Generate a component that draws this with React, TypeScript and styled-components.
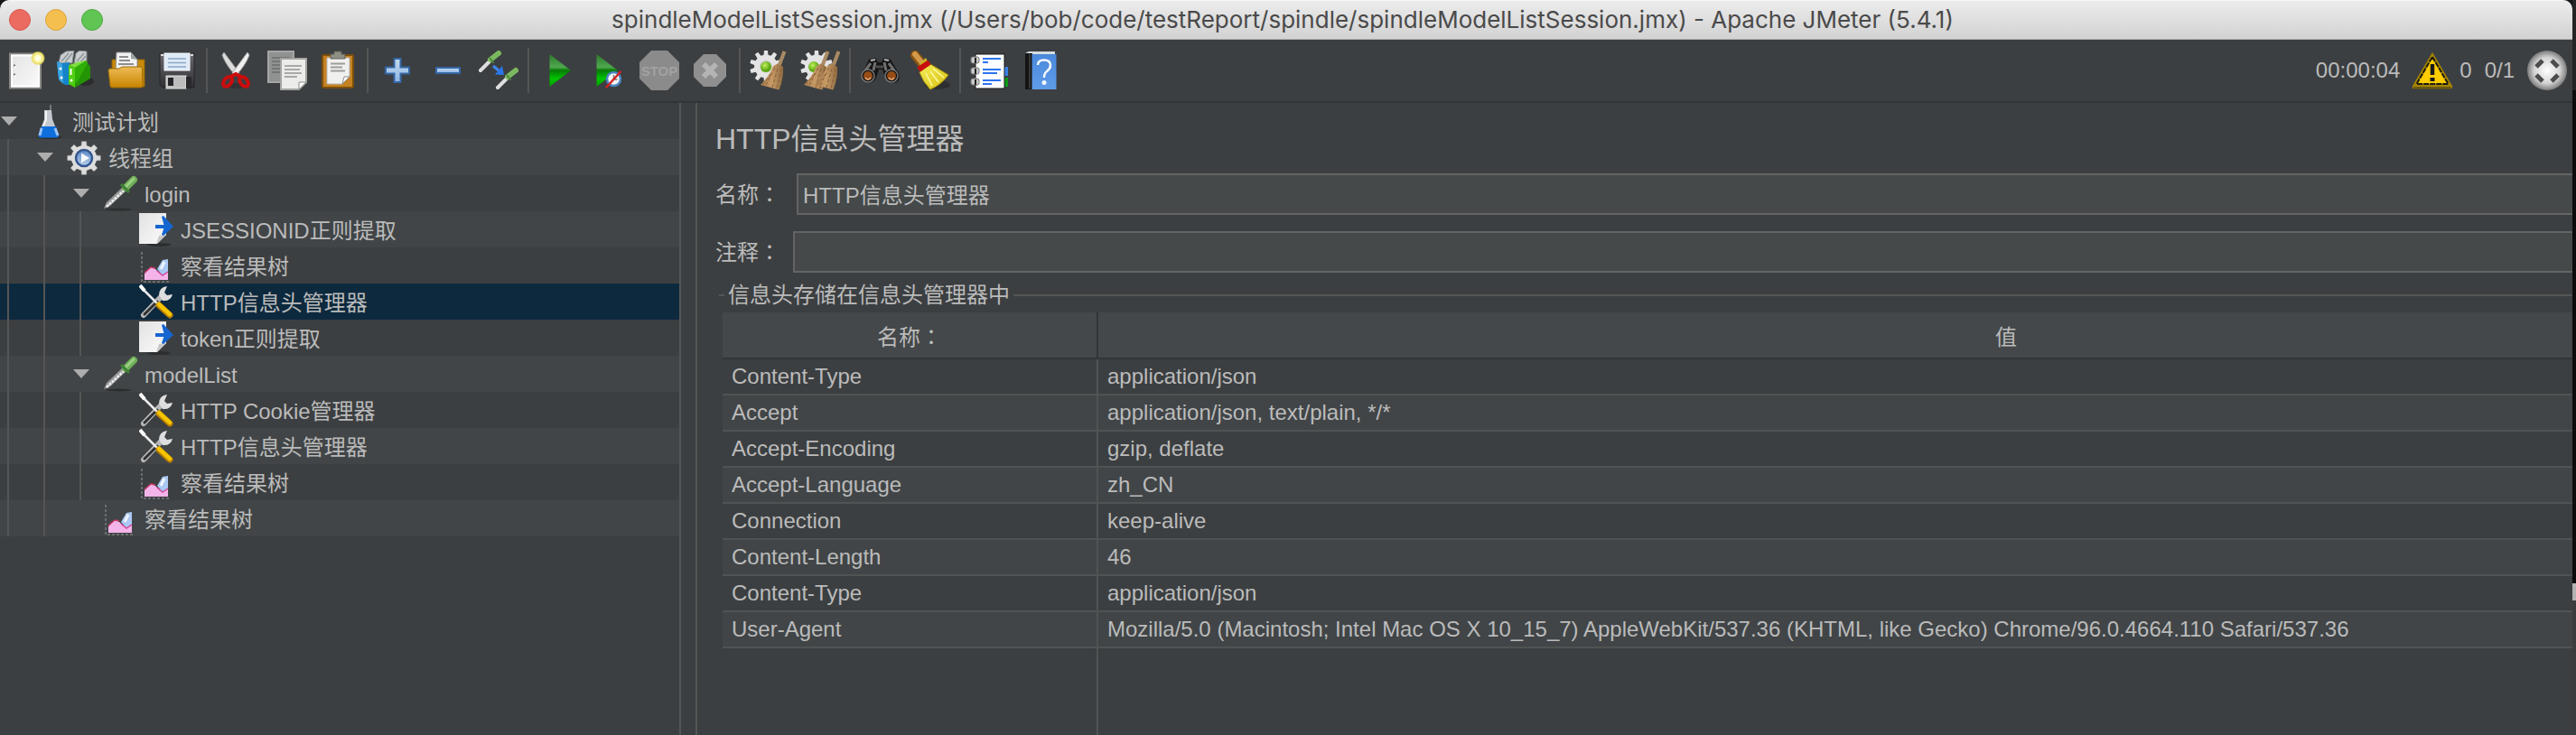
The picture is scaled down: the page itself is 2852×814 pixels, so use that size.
import React from "react";
import styled, { createGlobalStyle } from "styled-components";

const color = {
  panel: "#3c3f41",
  stripe: "#414547",
  header: "#44484a",
  line: "#555555",
  grid: "#505354",
  dark: "#323537",
  field: "#45494a",
  fieldBorder: "#646464",
  text: "#bbbbbb",
  selected: "#0d293e",
};

const GlobalStyle = createGlobalStyle`
  *, *::before, *::after { box-sizing: border-box; }
  body {
    margin: 0;
    background: #161718;
    color: ${color.text};
    font-family: "Liberation Sans", "Noto Sans CJK SC", sans-serif;
    font-size: 24px;
  }
  button, input { font: inherit; color: inherit; }
`;

const Desktop = styled.div`
  display: flex;
  min-height: 100vh;
`;

const Backdrop = styled.div`
  flex: none;
  width: 4px;
  background: linear-gradient(#232425 0 100px, #0c0c0d 100px 646px, #b4b2b2 646px 665px, #3a3c3e 665px);
`;

const Window = styled.div`
  flex: 1;
  min-width: 0;
  display: flex;
  flex-direction: column;
  overflow: hidden;
  border-radius: 10px 10px 0 0;
  background: ${color.panel};
`;

const TitleBar = styled.header`
  display: flex;
  align-items: center;
  height: 44px;
  padding: 0 18px 0 10px;
  background: linear-gradient(#ececec, #d2d2d2);
  border-top: 1px solid #f6f6f6;
  border-bottom: 1px solid #b1b1b1;
`;

const Lights = styled.div`
  flex: 1;
  display: flex;
  gap: 16px;
`;

const Light = styled.button<{ $fill: string; $edge: string }>`
  width: 24px;
  height: 24px;
  padding: 0;
  border: 1px solid ${(p) => p.$edge};
  border-radius: 50%;
  background: ${(p) => p.$fill};
`;

const WindowTitle = styled.h1`
  margin: 0;
  color: #4a4a4a;
  font-family: Inter, "Liberation Sans", sans-serif;
  font-size: 26px;
  font-weight: 400;
  line-height: 32px;
  white-space: nowrap;
`;

const TitleSpacer = styled.div`
  flex: 1;
`;

const ToolBar = styled.div`
  display: flex;
  align-items: center;
  height: 70px;
  padding-right: 6px;
  border-bottom: 2px solid ${color.dark};
`;

const ToolButton = styled.button`
  display: grid;
  place-items: center;
  width: 56px;
  height: 56px;
  padding: 0;
  border: 0;
  background: none;
`;

const Separator = styled.div`
  width: 2px;
  height: 50px;
  margin: 0 4px;
  background: ${color.line};
`;

const Status = styled.div`
  display: flex;
  align-items: center;
  gap: 14px;
  margin-left: auto;
`;

const Errors = styled.span`
  display: flex;
  align-items: center;
  gap: 8px;
`;

const Body = styled.div`
  flex: 1;
  display: flex;
`;

const TreePane = styled.nav`
  flex: none;
  width: 754px;
  border-right: 2px solid ${color.line};
`;

const Splitter = styled.div`
  flex: none;
  width: 18px;
  border-right: 2px solid ${color.line};
`;

const TreeList = styled.ul`
  margin: 0;
  padding: 0;
  list-style: none;
`;

const TreeRow = styled.li<{ $odd: boolean; $selected: boolean }>`
  display: flex;
  height: 40px;
  background: ${(p) => (p.$selected ? color.selected : p.$odd ? color.stripe : color.panel)};
`;

const Guide = styled.span`
  width: 32px;
  margin-left: 8px;
  border-left: 2px solid ${color.line};
`;

const Toggle = styled.button`
  display: grid;
  place-items: center;
  width: 34px;
  padding: 0 14px 0 0;
  border: 0;
  background: none;
`;

const Leaf = styled.span`
  width: 34px;
`;

const NodeName = styled.span`
  margin-left: 6px;
  padding-top: 4px;
  line-height: 36px;
  white-space: nowrap;
`;

const Main = styled.main`
  flex: 1;
  min-width: 0;
  display: flex;
  overflow: hidden;
`;

/* The editor form is wider than its pane and runs on past the right edge. */
const Form = styled.form`
  flex: none;
  display: flex;
  flex-direction: column;
  width: calc(100% + 378px);
  padding: 20px 0 0 20px;
`;

const Heading = styled.h2`
  margin: 0 0 18px;
  font-size: 32px;
  font-weight: 400;
  line-height: 40px;
`;

const Field = styled.div<{ $gap: number }>`
  display: flex;
  align-items: center;
  gap: ${(p) => p.$gap}px;
  margin-bottom: 18px;
`;

const Label = styled.label`
  flex: none;
  line-height: 32px;
`;

const Colon = styled.span`
  font-family: "Noto Sans CJK TC", sans-serif;
`;

const TextInput = styled.input`
  flex: 1;
  min-width: 0;
  height: 46px;
  padding: 0 5px 2px;
  border: 2px solid ${color.fieldBorder};
  border-radius: 0;
  background: ${color.field};
  line-height: 32px;
  outline: none;
`;

const Group = styled.fieldset`
  flex: 1;
  display: flex;
  flex-direction: column;
  min-width: 0;
  margin: -5px 0 0 4px;
  padding: 7px 0 0 4px;
  border: 0;
  border-top: 2px solid ${color.line};
`;

const Legend = styled.legend`
  margin-left: 2px;
  padding: 0 4px;
  line-height: 24px;
`;

const Table = styled.table`
  width: 100%;
  table-layout: fixed;
  border-collapse: separate;
  border-spacing: 0;
`;

const HeadCell = styled.th<{ $first?: boolean }>`
  width: ${(p) => (p.$first ? "416px" : "auto")};
  height: 52px;
  padding: 0;
  border-bottom: 2px solid ${color.dark};
  border-right: ${(p) => (p.$first ? `2px solid ${color.dark}` : "0")};
  background: ${color.header};
  font-weight: 400;
`;

const Row = styled.tr<{ $odd: boolean }>`
  background: ${(p) => (p.$odd ? color.stripe : color.panel)};
`;

const Cell = styled.td<{ $first?: boolean }>`
  height: 40px;
  padding: 0 10px;
  border-bottom: 2px solid ${color.grid};
  border-right: ${(p) => (p.$first ? `2px solid ${color.grid}` : "0")};
  line-height: 38px;
  white-space: nowrap;
`;

const TableTail = styled.div`
  flex: 1;
  width: 416px;
  border-right: 2px solid ${color.grid};
`;

/* ---------- toolbar icons ---------- */

const Svg = ({ size = 44, children }: { size?: number; children: React.ReactNode }) => (
  <svg width={size} height={size} viewBox={`0 0 ${size} ${size}`} aria-hidden="true">
    {children}
  </svg>
);

const HiddenSvg = styled.svg`
  display: block;
  height: 0;
`;

const Gradients = () => (
  <HiddenSvg width="0" height="0" aria-hidden="true">
    <defs>
      <linearGradient id="paper" x1="0" y1="0" x2="1" y2="1">
        <stop offset="0" stopColor="#e2e2e2" />
        <stop offset="1" stopColor="#fbfbfb" />
      </linearGradient>
      <linearGradient id="gold" x1="0" y1="0" x2="0" y2="1">
        <stop offset="0" stopColor="#eebb55" />
        <stop offset="1" stopColor="#c88400" />
      </linearGradient>
      <linearGradient id="steel" x1="0" y1="0" x2="0" y2="1">
        <stop offset="0" stopColor="#6d6b70" />
        <stop offset="1" stopColor="#2f2e32" />
      </linearGradient>
      <linearGradient id="play" x1="0" y1="0" x2="0" y2="1">
        <stop offset="0" stopColor="#2c7a2c" />
        <stop offset=".4" stopColor="#4fa84f" />
        <stop offset=".5" stopColor="#067a06" />
        <stop offset=".75" stopColor="#00c400" />
        <stop offset="1" stopColor="#009a00" />
      </linearGradient>
      <linearGradient id="azure" x1="0" y1="0" x2="0" y2="1">
        <stop offset="0" stopColor="#c3d9f0" />
        <stop offset="1" stopColor="#8fb8e4" />
      </linearGradient>
      <linearGradient id="book" x1="0" y1="0" x2="0" y2="1">
        <stop offset="0" stopColor="#4a88dc" />
        <stop offset="1" stopColor="#5f9ce8" />
      </linearGradient>
      <linearGradient id="straw" x1="0" y1="0" x2="1" y2="0">
        <stop offset="0" stopColor="#a87c4a" />
        <stop offset=".5" stopColor="#c79a66" />
        <stop offset="1" stopColor="#8f6a40" />
      </linearGradient>
      <linearGradient id="brush" x1="0" y1="0" x2="1" y2="1">
        <stop offset="0" stopColor="#f4ee5a" />
        <stop offset="1" stopColor="#d8bf10" />
      </linearGradient>
      <linearGradient id="lens" x1="0" y1="0" x2="0" y2="1">
        <stop offset="0" stopColor="#5a86c4" />
        <stop offset="1" stopColor="#b9d0ec" />
      </linearGradient>
      <radialGradient id="ball">
        <stop offset="0" stopColor="#ffffff" />
        <stop offset=".65" stopColor="#d4d4d4" />
        <stop offset="1" stopColor="#7c7c7c" />
      </radialGradient>
      <radialGradient id="lime" cx=".4" cy=".35">
        <stop offset="0" stopColor="#c4f060" />
        <stop offset="1" stopColor="#5aa810" />
      </radialGradient>
      <radialGradient id="glow">
        <stop offset="0" stopColor="#ffffff" />
        <stop offset=".4" stopColor="#fffbc0" />
        <stop offset=".8" stopColor="#e8dc60" />
        <stop offset="1" stopColor="#e8dc60" stopOpacity="0" />
      </radialGradient>
    </defs>
  </HiddenSvg>
);

const NewIcon = () => (
  <Svg>
    <rect x="5" y="3.5" width="34" height="38" fill="url(#paper)" stroke="#8a8a86" strokeWidth="2" />
    <rect x="7" y="5.5" width="30" height="34" fill="none" stroke="#fff" strokeWidth="2" />
    <path d="M9 16.5h2M9 26.5h2" stroke="#777" strokeWidth="2" />
    <path d="M10 18.5h2M10 28.5h2" stroke="#fff" strokeWidth="2" />
    <circle cx="36" cy="8.5" r="8" fill="url(#glow)" />
  </Svg>
);

const TemplatesIcon = () => (
  <Svg>
    <ellipse cx="32" cy="34" rx="10" ry="5" fill="#2b2d2e" />
    <path d="M3 14 5 5 11 1 20 0 18 14ZM20 14 22 3 26 0 34 1 34 16Z" fill="#c9cdcf" stroke="#7c8587" />
    <path d="M6 12 14 3M10 13 18 3M23 12 31 3M27 13 33 6" stroke="#8f9698" strokeWidth="1.5" />
    <path d="M1 12 6 14 15 13 15 38 10 38 3 32Z" fill="#1583c8" />
    <path d="M1 12 7 15 8 37 3 32Z" fill="#3aa4e2" />
    <circle cx="5" cy="20" r="1.5" fill="#fff" />
    <circle cx="6" cy="30" r="1.5" fill="#fff" />
    <path d="M14 16 21 19 21 41 14 37Z" fill="#4fd010" />
    <path d="M21 19 33 11 38 18 38 31 21 41Z" fill="#239404" />
    <path d="M21 19 33 11 35 14 24 34 21 36Z" fill="#2fae08" />
    <path d="M14 16 27 12 33 11 21 19Z" fill="#7de03c" />
    <path d="M16.5 20v7" stroke="#fff" strokeWidth="2" />
    <circle cx="17" cy="33" r="1.5" fill="#fff" />
  </Svg>
);

const OpenIcon = () => (
  <Svg>
    <path d="M6 10h8v8h20v-8h8v30H6z" fill="#c98a08" stroke="#8f6206" />
    <path d="M11 2h16l7 8v12H10z" fill="#f2f2f2" stroke="#8d8f8f" />
    <path d="M27 2v7l7 1z" fill="#9aa3a3" />
    <path d="M14 7h10M14 11h12M13 15h17" stroke="#6e6e6e" strokeWidth="1.5" />
    <path d="M2 22q0-2 2-2h10l3-2h20q2 0 2.5 2L40 39q0 2-2 2H6q-2 0-2-2z" fill="url(#gold)" stroke="#9a6a06" />
  </Svg>
);

const SaveIcon = () => (
  <Svg>
    <path d="M3 3h38v38H6l-3-3z" fill="url(#steel)" stroke="#252427" />
    <rect x="8" y="3" width="28" height="19" fill="#dfeaf7" stroke="#f6faff" />
    <path d="M12 9h20M12 13.5h20M12 18h20" stroke="#8aa7c6" strokeWidth="1.5" />
    <path d="M4 5h3M37 5h3" stroke="#ddd" strokeWidth="2" />
    <rect x="10" y="28" width="22" height="14" fill="#bdbdbd" stroke="#e2e2e2" />
    <rect x="12" y="30" width="6" height="9" fill="#26262a" />
    <path d="M32 29h6v13h-6z" fill="#29282c" />
  </Svg>
);

const CutIcon = () => (
  <Svg>
    <ellipse cx="22" cy="39" rx="13" ry="3" fill="#303234" />
    <path d="M8 2 25 25 21 28Q10 16 6 5Z" fill="#dcdcdc" stroke="#9c9c9c" />
    <path d="M34 2 17 25 21 28Q32 16 36 5Z" fill="#f0f0f0" stroke="#a4a4a4" />
    <g fill="none" stroke="#cc0c0c" strokeWidth="4">
      <ellipse cx="12" cy="34.5" rx="4" ry="6" transform="rotate(40 12 34.5)" />
      <ellipse cx="30" cy="34.5" rx="4" ry="6" transform="rotate(-40 30 34.5)" />
      <path d="M15 29 21 26 27 29" />
    </g>
  </Svg>
);

const CopyIcon = () => (
  <Svg>
    <rect x="1" y="1" width="28" height="34" fill="#909292" stroke="#a4a6a6" strokeWidth="2" />
    <path d="M5 8h20M5 12h20M5 16h10M5 20h10M5 24h10" stroke="#747676" strokeWidth="2" />
    <path d="M15 9h28v26l-8 8H15z" fill="#ececea" stroke="#a4a6a0" strokeWidth="2" />
    <path d="M43 35h-8v8z" fill="#fff" stroke="#8b8d88" />
    <path d="M19 17h19M19 21h17M19 25h19M19 29h14" stroke="#a9aaa6" strokeWidth="2" />
  </Svg>
);

const PasteIcon = () => (
  <Svg>
    <rect x="5" y="5" width="34" height="36" rx="1" fill="#c58222" stroke="#7d4f0a" strokeWidth="2" />
    <path d="M10 8h25v21l-8 8H10z" fill="#f0f0ee" stroke="#b6b7b2" />
    <path d="M35 29h-6l-2 8z" fill="#fff" stroke="#8b8d88" />
    <path d="M14 14.5h16M14 18.5h13M14 22.5h16" stroke="#9b9d98" strokeWidth="2" />
    <path d="M14 9V4h4V1h8v3h4v5z" fill="#8e9085" stroke="#5d5f55" />
  </Svg>
);

const PlusIcon = () => (
  <Svg>
    <path d="M18.5 9h7v9.5H35v7h-9.5V35h-7v-9.5H9v-7h9.5z" fill="url(#azure)" stroke="#3467a6" strokeWidth="2" />
  </Svg>
);

const MinusIcon = () => (
  <Svg>
    <rect x="9" y="19" width="26" height="6" fill="url(#azure)" stroke="#3467a6" strokeWidth="2" />
  </Svg>
);

const ToggleIcon = () => (
  <Svg>
    <g strokeLinecap="round">
      <path d="M2 22 12 12M21 41 31 31" stroke="#dedede" strokeWidth="4" />
      <path d="M13 10 22 3M32 29 41 22" stroke="#7cb860" strokeWidth="6" />
      <path d="M12.5 8.5 16 13M31.5 27.5 35 32" stroke="#4d8a3a" strokeWidth="2" />
    </g>
    <path d="M16 17 22 22" stroke="#3f86ee" strokeWidth="3" />
    <path d="M28 27 18 26.5 26 17Z" fill="#2a76ea" />
  </Svg>
);

const StartIcon = () => (
  <Svg>
    <path d="M12.5 4 36 22 12.5 40z" fill="url(#play)" />
  </Svg>
);

const StartNoPauseIcon = () => (
  <Svg>
    <path d="M8.5 4 32 22 8.5 40z" fill="url(#play)" />
    <circle cx="27.5" cy="31.5" r="7.5" fill="#f4f4f4" stroke="#4a84c0" strokeWidth="2.5" />
    <path d="M27.5 27v5h4" fill="none" stroke="#777" strokeWidth="1.5" />
    <path d="M19 41 35.5 23" stroke="#d42020" strokeWidth="2.5" />
  </Svg>
);

const StopIcon = () => (
  <Svg>
    <path d="M13 0h18l13 13v18L31 44H13L0 31V13z" fill="#8b8b8b" />
    <text x="22" y="28" textAnchor="middle" fontFamily="Liberation Sans, sans-serif" fontSize="15" fontWeight="700" fill="#a2a2a2">STOP</text>
  </Svg>
);

const ShutdownIcon = () => (
  <Svg>
    <path d="M15 4h14l11 11v14L29 40H15L4 29V15z" fill="#8f8f8f" />
    <path d="M15 15 29 29M29 15 15 29" stroke="#b4b4b4" strokeWidth="6" />
  </Svg>
);

const teeth = (cx: number, cy: number, outer: number, inner: number, n: number) => {
  const pts: string[] = [];
  for (let i = 0; i < n; i++) {
    const a = (i / n) * Math.PI * 2 - Math.PI / 2;
    const s = Math.PI / n;
    ([[-0.6, inner], [-0.36, outer], [0.36, outer], [0.6, inner]] as const).forEach(([k, r]) =>
      pts.push(`${(cx + Math.cos(a + k * s) * r).toFixed(1)},${(cy + Math.sin(a + k * s) * r).toFixed(1)}`)
    );
  }
  return pts.join(" ");
};

const Broom = ({ dx = 0 }: { dx?: number }) => (
  <g transform={`translate(${dx} 0)`}>
    <path d="M38.5 1 32 18" stroke="#a98a64" strokeWidth="4" />
    <path d="M26 17 31 14.5 37 18Q38 30 32.5 43.5L12 38Q22 28 26 17Z" fill="url(#straw)" />
    <path d="M28 19 18 38M31 20 25 41M35 20 30 42M24 26 15 37" stroke="#86603a" strokeWidth="1" strokeDasharray="4 2" />
  </g>
);

const ClearIcon = () => (
  <Svg>
    <polygon points={teeth(18, 17.5, 18, 13, 10)} fill="#e4e4e4" />
    <circle cx="18" cy="17.5" r="7" fill="#cfcfcf" />
    <circle cx="18" cy="18" r="6" fill="url(#lime)" />
    <Broom />
  </Svg>
);

const ClearAllIcon = () => (
  <Svg>
    <polygon points={teeth(18, 17.5, 18, 13, 10)} fill="#e4e4e4" />
    <circle cx="15" cy="18" r="6" fill="url(#lime)" />
    <Broom dx={-8} />
    <Broom dx={4} />
  </Svg>
);

const SearchIcon = () => (
  <Svg>
    <path d="M10 10 17 8 20 13h4l3-5 7 2 9 15q3 10-6 11-8 0-10-9l-2-6h-4l-2 6q-2 9-10 9-9-1-6-11z" fill="#151515" />
    <path d="M12 14 6 22M32 14l6 8M17 13l-2 9M27 13l2 9" stroke="#6f6f6f" strokeWidth="3" />
    <path d="M12 11 17 10M32 11 27 10" stroke="#b4b4b4" strokeWidth="2" />
    <path d="M18 18h8" stroke="#4d4d4d" strokeWidth="3" />
    <circle cx="9" cy="28" r="7" fill="#141414" stroke="#777" strokeWidth="1.5" />
    <circle cx="35" cy="28" r="7" fill="#141414" stroke="#777" strokeWidth="1.5" />
    <circle cx="9" cy="28" r="5" fill="#964c14" />
    <circle cx="35" cy="28" r="5" fill="#964c14" />
    <path d="M6 30q3 4 6 0M32 30q3 4 6 0" stroke="#e6a878" strokeWidth="1.5" fill="none" />
  </Svg>
);

const ResetSearchIcon = () => (
  <Svg>
    <ellipse cx="30" cy="38" rx="14" ry="5" fill="#2d2f30" />
    <path d="M5 5 14 16" stroke="#8a5410" strokeWidth="10" strokeLinecap="round" />
    <path d="M5 4 13 14" stroke="#d29a4a" strokeWidth="6" strokeLinecap="round" />
    <path d="M10 15 17 8l4 8-8 6z" fill="#c8b420" />
    <path d="M10 24 22 15 42 27Q34 38 22 43Q14 35 10 24Z" fill="url(#brush)" stroke="#a8920a" />
    <path d="M17 25 24 39M22 23 31 35M25 20 37 30" stroke="#fbf8a0" strokeWidth="1.5" />
    <path d="M9 21 21 13" stroke="#c81010" strokeWidth="6" />
  </Svg>
);

const FunctionIcon = () => (
  <Svg>
    <rect x="38" y="18" width="4" height="10" fill="#3b82e4" />
    <rect x="38" y="30" width="4" height="10" fill="#0c9a1a" />
    <rect x="6" y="4" width="32" height="38" fill="#fdfdfd" stroke="#1a1a1a" />
    {[11, 23, 35].map((y) => (
      <g key={y}>
        <rect x="1" y={y - 4} width="9" height="7" rx="2" fill="#c9c9c9" stroke="#777" />
        <path d={`M6 ${y - 3}v6`} stroke="#222" strokeWidth="2" />
      </g>
    ))}
    <path d="M14 9h20M14 13h6M14 21h20M14 25h16M14 33h20M14 37h10" stroke="#2c74f0" strokeWidth="2" />
  </Svg>
);

const HelpIcon = () => (
  <Svg>
    <path d="M5 3 9 1h29v4H5z" fill="#d6dbe0" />
    <rect x="5" y="3" width="8" height="40" fill="#141414" />
    <path d="M10 4v38" stroke="#5a5a5a" />
    <rect x="12.5" y="4" width="27" height="39" fill="url(#book)" />
    <path d="M19 16Q19 10.5 26 10.5T33 16.5Q33 20 29 23Q26 25 26 30" fill="none" stroke="#f6f9ff" strokeWidth="2.5" />
    <circle cx="26" cy="35.5" r="2.5" fill="#f6f9ff" />
  </Svg>
);

const WarningIcon = () => (
  <Svg>
    <path d="M22 2 44 39v3H0v-3z" fill="#a58500" />
    <path d="M1 40h42v2.500H1z" fill="#6a5a10" />
    <path d="M22 7 39.5 37h-35z" fill="#ffcc00" stroke="#1c1a10" strokeWidth="2" strokeDasharray="6 1" />
    <path d="M22 15v12" stroke="#1a1a1a" strokeWidth="4.5" />
    <rect x="19.5" y="30" width="5" height="4" fill="#1a1a1a" />
  </Svg>
);

const ThreadsIcon = () => (
  <Svg>
    <circle cx="22" cy="22" r="22" fill="url(#ball)" />
    <g fill="none" stroke="#4c4c4c" strokeWidth="5">
      <path d="M10 18 17 11M27 11 34 18M34 27 27 34M17 34 10 27" />
    </g>
  </Svg>
);

/* ---------- tree icons ---------- */

const PlanIcon = () => (
  <Svg size={40}>
    <ellipse cx="21" cy="38" rx="13" ry="2" fill="#2c2e2f" />
    <path d="M22 2v6" stroke="#888" strokeWidth="1.5" />
    <path d="M15 8h8l1 10 7 18q0 2-3 2H11q-3 0-2-3l6-17z" fill="#c3c9cf" />
    <path d="M17 9v10l-5 10" stroke="#f3f5f7" strokeWidth="2" fill="none" />
    <path d="M12 26h16l3 10q0 2.5-3 2.5H11q-3 0-2-3z" fill="#0f6fdc" />
    <path d="M12 28 10 36M27 28l3 8" stroke="#9cc4f4" strokeWidth="3" />
  </Svg>
);

const ThreadGroupIcon = () => (
  <Svg size={40}>
    <polygon points={teeth(19, 21, 18.5, 13, 8)} fill="#dcdcdc" stroke="#a8a8a8" strokeWidth=".5" />
    <circle cx="19" cy="21" r="14" fill="#dedede" />
    <circle cx="19" cy="21" r="9" fill="url(#lens)" stroke="#35578f" strokeWidth="2.5" />
    <path d="M16 15.5 25 21l-9 5.5z" fill="#f6f8fb" />
  </Svg>
);

const SamplerIcon = () => (
  <Svg size={40}>
    <ellipse cx="18" cy="38" rx="14" ry="1.5" fill="#2c2e2f" />
    <path d="M1 37 4 30 22 13 26 17 8 34Z" fill="#9a9a9a" />
    <path d="M4 35 23 17" stroke="#f2f2f2" strokeWidth="2.5" strokeDasharray="3 1" />
    <path d="M25 14 34 5" stroke="#6fae58" strokeWidth="8" strokeLinecap="round" />
    <path d="M26 12 34 4" stroke="#9bd084" strokeWidth="3" strokeLinecap="round" />
    <path d="M20 10 29 19" stroke="#3f8038" strokeWidth="3" />
  </Svg>
);

const ExtractorIcon = () => (
  <Svg size={40}>
    <ellipse cx="22" cy="37" rx="13" ry="2" fill="#2c2e2f" />
    <path d="M0 2h30v24L20 36H0z" fill="url(#paper)" />
    <path d="M30 26 19 36l3-9z" fill="#c8c8c8" />
    <path d="M18 17h12" stroke="#1565d0" strokeWidth="4" />
    <path d="M25 6l2-1 11 12-11 10-2-1 3-9z" fill="#1565d0" />
  </Svg>
);

const ResultsIcon = () => (
  <Svg size={40}>
    <path d="M3 5v33h31" fill="none" stroke="#6b6e70" strokeWidth="2" strokeDasharray="3 2" />
    <path d="M6 29 13 22l5 2 4 4h10v8H6z" fill="#f4b4ea" />
    <path d="M6 28 13 22l5 1" stroke="#c83a6a" strokeWidth="1.5" fill="none" />
    <path d="M20 24 26 14l6-1v14l-6 4z" fill="#aac8f2" />
    <path d="M24 24 28 16" stroke="#eef5ff" strokeWidth="3" />
    <path d="M20 26l6 5 6-4" stroke="#d04a9a" strokeWidth="1.5" fill="none" />
  </Svg>
);

const ConfigIcon = () => (
  <Svg size={40}>
    <path d="M5 35 24 15" stroke="#b8b8b8" strokeWidth="6" strokeLinecap="round" />
    <path d="M6 34 20 20" stroke="#2e3032" strokeWidth="3" strokeLinecap="round" />
    <path d="M22 13Q22 4 31 3l-3 7 3 3 6-1q-2 8-11 7z" fill="#dedede" />
    <path d="M2 4 20 22" stroke="#ececec" strokeWidth="2.5" />
    <path d="M1 2 6 8" stroke="#fff" strokeWidth="4" />
    <path d="M22 24 34 35" stroke="#b87e00" strokeWidth="7" strokeLinecap="round" />
    <path d="M22 23 34 34" stroke="#f5c400" strokeWidth="4.5" strokeLinecap="round" />
  </Svg>
);

/* ---------- data ---------- */

const toolGroups: [string, React.FC][][] = [
  [["新建", NewIcon], ["模板", TemplatesIcon], ["打开", OpenIcon], ["保存", SaveIcon]],
  [["剪切", CutIcon], ["复制", CopyIcon], ["粘贴", PasteIcon]],
  [["展开", PlusIcon], ["折叠", MinusIcon], ["切换", ToggleIcon]],
  [["启动", StartIcon], ["不停顿开始", StartNoPauseIcon], ["停止", StopIcon], ["关闭", ShutdownIcon]],
  [["清除", ClearIcon], ["清除全部", ClearAllIcon]],
  [["搜索", SearchIcon], ["重置搜索", ResetSearchIcon]],
  [["函数助手", FunctionIcon], ["帮助", HelpIcon]],
];

type Node = { level: number; name: string; Icon: React.FC; open?: boolean; selected?: boolean };

const nodes: Node[] = [
  { level: 0, name: "测试计划", Icon: PlanIcon, open: true },
  { level: 1, name: "线程组", Icon: ThreadGroupIcon, open: true },
  { level: 2, name: "login", Icon: SamplerIcon, open: true },
  { level: 3, name: "JSESSIONID正则提取", Icon: ExtractorIcon },
  { level: 3, name: "察看结果树", Icon: ResultsIcon },
  { level: 3, name: "HTTP信息头管理器", Icon: ConfigIcon, selected: true },
  { level: 3, name: "token正则提取", Icon: ExtractorIcon },
  { level: 2, name: "modelList", Icon: SamplerIcon, open: true },
  { level: 3, name: "HTTP Cookie管理器", Icon: ConfigIcon },
  { level: 3, name: "HTTP信息头管理器", Icon: ConfigIcon },
  { level: 3, name: "察看结果树", Icon: ResultsIcon },
  { level: 2, name: "察看结果树", Icon: ResultsIcon },
];

const headers: [string, string][] = [
  ["Content-Type", "application/json"],
  ["Accept", "application/json, text/plain, */*"],
  ["Accept-Encoding", "gzip, deflate"],
  ["Accept-Language", "zh_CN"],
  ["Connection", "keep-alive"],
  ["Content-Length", "46"],
  ["Content-Type", "application/json"],
  [
    "User-Agent",
    "Mozilla/5.0 (Macintosh; Intel Mac OS X 10_15_7) AppleWebKit/537.36 (KHTML, like Gecko) Chrome/96.0.4664.110 Safari/537.36",
  ],
];

export default function App() {
  return (
    <>
      <GlobalStyle />
      <Gradients />
      <Desktop>
        <Window>
          <TitleBar>
            <Lights>
              <Light $fill="#ec6b60" $edge="#d5544a" aria-label="关闭窗口" />
              <Light $fill="#f5bf4f" $edge="#d9a13c" aria-label="最小化" />
              <Light $fill="#61c554" $edge="#4ba93f" aria-label="缩放" />
            </Lights>
            <WindowTitle>
              spindleModelListSession.jmx (/Users/bob/code/testReport/spindle/spindleModelListSession.jmx) - Apache JMeter (5.4.1)
            </WindowTitle>
            <TitleSpacer />
          </TitleBar>

          <ToolBar role="toolbar">
            {toolGroups.map((group, i) => (
              <React.Fragment key={i}>
                {i > 0 && <Separator />}
                {group.map(([label, Icon]) => (
                  <ToolButton key={label} type="button" aria-label={label}>
                    <Icon />
                  </ToolButton>
                ))}
              </React.Fragment>
            ))}
            <Status>
              <span>00:00:04</span>
              <Errors>
                <WarningIcon />
                <span>0</span>
              </Errors>
              <span>0/1</span>
              <ThreadsIcon />
            </Status>
          </ToolBar>

          <Body>
            <TreePane>
              <TreeList role="tree">
                {nodes.map(({ level, name, Icon, open, selected }, i) => (
                  <TreeRow
                    key={i}
                    role="treeitem"
                    aria-level={level + 1}
                    aria-selected={!!selected}
                    $odd={i % 2 === 1}
                    $selected={!!selected}
                  >
                    {Array.from({ length: level }, (_, k) => (
                      <Guide key={k} />
                    ))}
                    {open ? (
                      <Toggle type="button" aria-label={`折叠 ${name}`}>
                        <svg width="18" height="10" viewBox="0 0 18 10" aria-hidden="true">
                          <path d="M0 0h18L9 10z" fill="#adadad" />
                        </svg>
                      </Toggle>
                    ) : (
                      <Leaf />
                    )}
                    <Icon />
                    <NodeName>{name}</NodeName>
                  </TreeRow>
                ))}
              </TreeList>
            </TreePane>
            <Splitter />
            <Main>
              <Form>
                <Heading>HTTP信息头管理器</Heading>
                <Field $gap={18}>
                  <Label htmlFor="name">
                    名称<Colon>：</Colon>
                  </Label>
                  <TextInput id="name" defaultValue="HTTP信息头管理器" />
                </Field>
                <Field $gap={14}>
                  <Label htmlFor="comment">
                    注释<Colon>：</Colon>
                  </Label>
                  <TextInput id="comment" />
                </Field>
                <Group>
                  <Legend>信息头存储在信息头管理器中</Legend>
                  <Table>
                    <thead>
                      <tr>
                        <HeadCell $first scope="col">
                          名称<Colon>：</Colon>
                        </HeadCell>
                        <HeadCell scope="col">值</HeadCell>
                      </tr>
                    </thead>
                    <tbody>
                      {headers.map(([name, value], i) => (
                        <Row key={i} $odd={i % 2 === 1}>
                          <Cell $first>{name}</Cell>
                          <Cell>{value}</Cell>
                        </Row>
                      ))}
                    </tbody>
                  </Table>
                  <TableTail />
                </Group>
              </Form>
            </Main>
          </Body>
        </Window>
        <Backdrop />
      </Desktop>
    </>
  );
}
